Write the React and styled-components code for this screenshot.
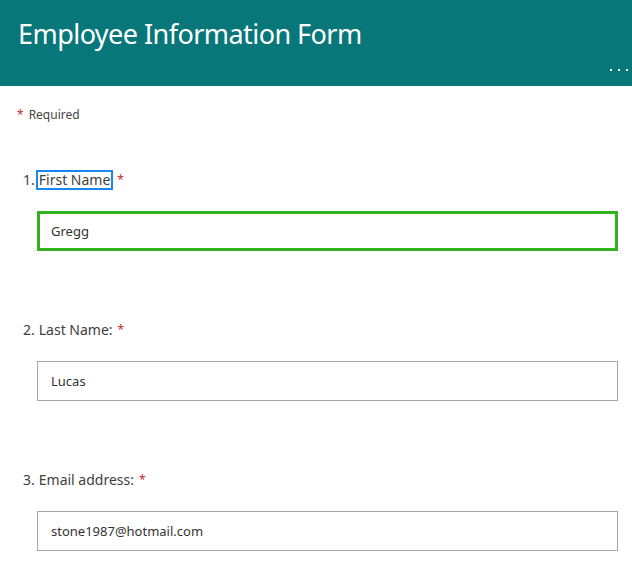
import React from 'react';
import styled, { createGlobalStyle } from 'styled-components';

const GlobalStyle = createGlobalStyle`
    body {
        margin: 0;
        background: #fff;
        font-family: "Noto Sans", "Open Sans", sans-serif;
    }
`;

const Page = styled.div`
    width: 632px;
    min-height: 579px;
    background: #fff;
`;

const Header = styled.header`
    position: relative;
    height: 86px;
    background: #07777a;
    padding: 14px 0 0 18px;
    box-sizing: border-box;
`;

const Title = styled.h1`
    margin: 0;
    font-weight: 400;
    font-size: 27px;
    line-height: 40px;
    color: #fff;
    letter-spacing: -0.55px;
`;

const MoreButton = styled.div`
    position: absolute;
    right: 4px;
    bottom: 15px;
    display: flex;
    gap: 6px;
`;

const Dot = styled.span`
    width: 2px;
    height: 2px;
    background: #fff;
`;

const Body = styled.div`
    display: flex;
    flex-direction: column;
    padding: 21px 0 0 0;
`;

const RequiredNote = styled.div`
    padding-left: 17px;
    font-size: 12px;
    line-height: 16px;
    color: #444;
`;

const Star = styled.span`
    color: #c4262e;
    margin-right: 5px;
`;

const Question = styled.div`
    display: flex;
    flex-direction: column;
    margin-top: ${props => props.first ? '47px' : '69px'};
`;

const LabelRow = styled.div`
    display: flex;
    align-items: center;
    padding-left: 23px;
    font-size: 14px;
    line-height: 20px;
    color: #404040;
`;

const Number = styled.span`
    margin-right: 3px;
`;

const LabelText = styled.span`
    display: inline-block;
    line-height: 16px;
    padding: 0 1px;
    outline: ${props => props.focused ? '2px solid #1a86f0' : 'none'};
`;

const LabelStar = styled.span`
    color: #c4262e;
    font-size: 12px;
    margin-left: ${props => props.focused ? '6px' : '4px'};
`;

const Field = styled.input`
    margin: 21px 0 0 37px;
    width: 581px;
    height: 40px;
    box-sizing: border-box;
    padding: 0 0 0 ${props => props.focused ? '11px' : '13px'};
    border: ${props => props.focused ? '3px solid #33b21f' : '1px solid #a6a6a6'};
    border-radius: 0;
    outline: none;
    font-family: inherit;
    font-size: 13px;
    color: #333;
    background: #fff;
`;

const questions = [
    { label: 'First Name', value: 'Gregg', focused: true },
    { label: 'Last Name:', value: 'Lucas' },
    { label: 'Email address:', value: 'stone1987@hotmail.com' },
];

const App = () => (
    <Page>
        <GlobalStyle />
        <Header>
            <Title>Employee Information Form</Title>
            <MoreButton>
                <Dot /><Dot /><Dot />
            </MoreButton>
        </Header>
        <Body>
            <RequiredNote><Star>*</Star>Required</RequiredNote>
            {
                questions.map((q, i) => (
                    <Question key={q.label} first={i === 0}>
                        <LabelRow>
                            <Number>{i + 1}.</Number>
                            <LabelText focused={q.focused}>{q.label}</LabelText>
                            <LabelStar focused={q.focused}>*</LabelStar>
                        </LabelRow>
                        <Field focused={q.focused} defaultValue={q.value} readOnly />
                    </Question>
                ))
            }
        </Body>
    </Page>
);

export default App;
